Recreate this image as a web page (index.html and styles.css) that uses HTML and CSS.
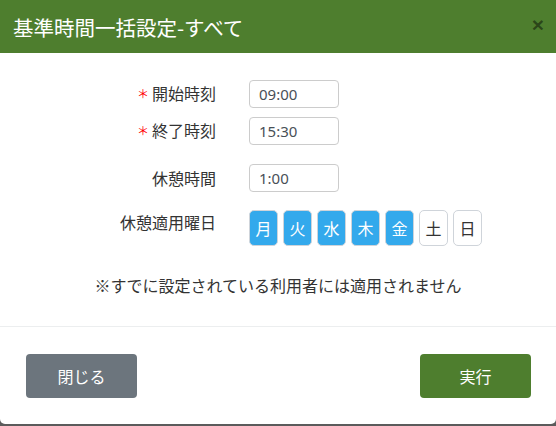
FILE: index.html
```html
<!DOCTYPE html>
<html lang="ja">
<head>
<meta charset="utf-8">
<title>基準時間一括設定</title>
<link rel="stylesheet" href="styles.css">
</head>
<body>
<div class="modal">
  <div class="modal-header">
    <h1 class="modal-title">基準時間一括設定-すべて</h1>
    <span class="close">×</span>
  </div>
  <div class="modal-body">
    <div class="form-row row-1">
      <div class="label"><span class="req">＊</span>開始時刻</div>
      <div class="field"><span class="input">09:00</span></div>
    </div>
    <div class="form-row row-2">
      <div class="label"><span class="req">＊</span>終了時刻</div>
      <div class="field"><span class="input">15:30</span></div>
    </div>
    <div class="form-row row-3">
      <div class="label">休憩時間</div>
      <div class="field"><span class="input">1:00</span></div>
    </div>
    <div class="form-row row-4">
      <div class="label label-top">休憩適用曜日</div>
      <div class="field days">
        <span class="day on">月</span>
        <span class="day on">火</span>
        <span class="day on">水</span>
        <span class="day on">木</span>
        <span class="day on">金</span>
        <span class="day">土</span>
        <span class="day">日</span>
      </div>
    </div>
    <p class="note">※すでに設定されている利用者には適用されません</p>
  </div>
  <div class="modal-footer">
    <button class="btn btn-secondary">閉じる</button>
    <button class="btn btn-primary">実行</button>
  </div>
</div>
</body>
</html>
```
FILE: styles.css
```css
html {
  background: #5b5b5b;
}
body {
  margin: 0;
  font-family: "Noto Sans", "Noto Sans CJK JP", sans-serif;
  color: #333;
}
.modal {
  height: 424px;
  background: #fff;
  border-radius: 0 0 5px 5px;
  overflow: hidden;
  display: flex;
  flex-direction: column;
}
.modal-header {
  height: 53px;
  background: #4e7e2e;
  display: flex;
  align-items: center;
  justify-content: space-between;
  padding: 0 12px 0 13px;
  flex-shrink: 0;
}
.modal-title {
  margin: 0;
  font-family: "Noto Sans CJK JP", sans-serif;
  font-weight: normal;
  font-size: 20.5px;
  line-height: 24px;
  color: #fff;
}
.close {
  font-family: "Liberation Sans", sans-serif;
  font-weight: bold;
  font-size: 21px;
  line-height: 24px;
  color: rgba(0, 0, 0, 0.45);
  margin-top: -3px;
}
.modal-body {
  padding: 27px 0 0;
  border-bottom: 1px solid #eceeef;
  flex: 1;
}
.form-row {
  display: grid;
  grid-template-columns: 216px 1fr;
  column-gap: 33px;
  align-items: center;
}
.row-1 { margin-bottom: 9px; }
.row-2 { margin-bottom: 19px; }
.row-3 { margin-bottom: 18px; }
.label {
  text-align: right;
  font-family: "Noto Sans CJK JP", sans-serif;
  font-size: 16px;
  line-height: 24px;
  color: #333;
}
.label-top {
  align-self: start;
}
.req {
  color: #f00;
  font-family: "Noto Sans CJK JP", sans-serif;
  font-size: 12px;
  margin-right: 3px;
  position: relative;
  top: -1px;
}
.input {
  display: block;
  box-sizing: border-box;
  width: 90px;
  height: 28px;
  border: 1px solid #ccc;
  border-radius: 4px;
  padding: 0 9px;
  font-size: 15px;
  line-height: 26px;
  color: #495057;
}
.days {
  display: flex;
  gap: 5px;
}
.day {
  box-sizing: border-box;
  width: 29px;
  height: 36px;
  border: 1px solid #cfd4da;
  border-radius: 5px;
  display: flex;
  align-items: center;
  justify-content: center;
  font-family: "Noto Sans CJK JP", sans-serif;
  font-size: 16px;
  color: #333;
  background: #fff;
}
.day.on {
  background: #33a9ec;
  color: #fff;
}
.note {
  margin: 27px 0 0;
  text-align: center;
  font-family: "Noto Sans CJK JP", sans-serif;
  font-size: 16px;
  line-height: 24px;
  color: #333;
}
.modal-footer {
  height: 97px;
  display: flex;
  justify-content: space-between;
  align-items: center;
  padding: 0 25px 0 26px;
  flex-shrink: 0;
}
.btn {
  width: 111px;
  height: 44px;
  border: 0;
  border-radius: 4px;
  color: #fff;
  font-family: "Noto Sans CJK JP", sans-serif;
  font-size: 16px;
}
.btn-secondary { background: #6c757d; }
.btn-primary { background: #4e7e2e; }
```
